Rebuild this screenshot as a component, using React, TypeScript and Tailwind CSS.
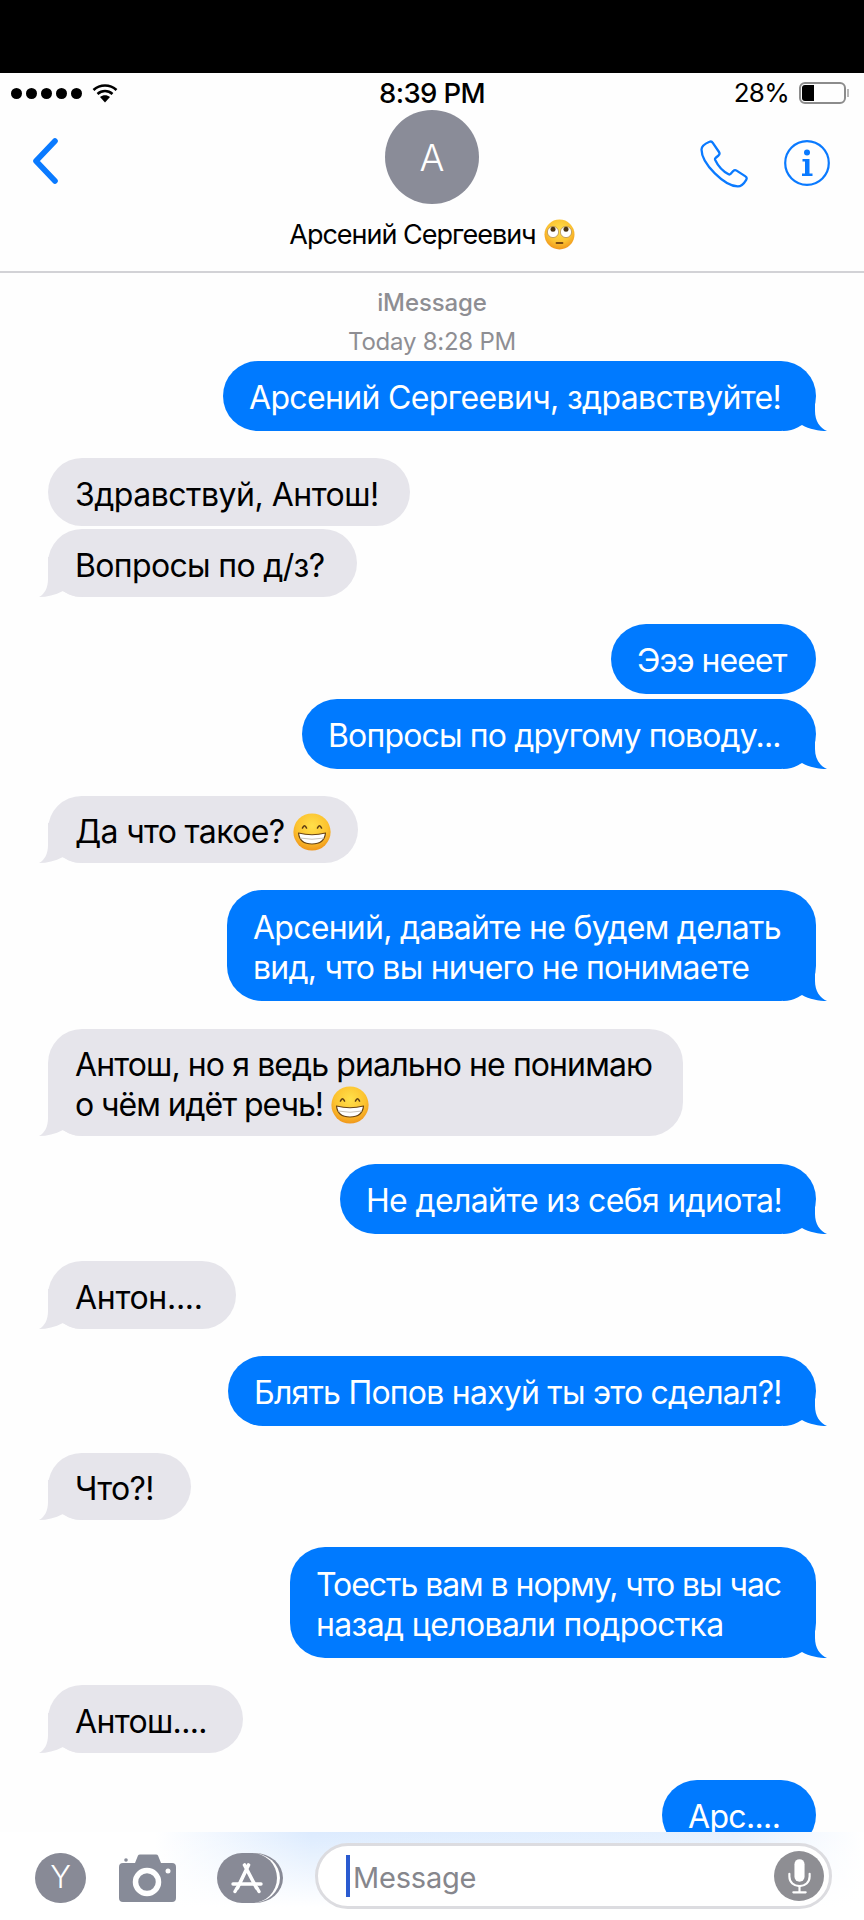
import React from "react";

const FONT = "font-['Inter','Liberation_Sans',sans-serif]";

function Grin({ id, className }: { id: string; className?: string }) {
  return (
    <svg viewBox="0 0 38 38" className={className}>
      <defs>
        <radialGradient id={id} cx="50%" cy="34%" r="70%">
          <stop offset="0%" stopColor="#ffe04a" />
          <stop offset="60%" stopColor="#fcc22e" />
          <stop offset="100%" stopColor="#ee8f18" />
        </radialGradient>
      </defs>
      <circle cx="19" cy="19" r="18.6" fill={`url(#${id})`} />
      <path d="M9.5 15 Q11.5 10.5 13.5 15" fill="none" stroke="#5b3a12" strokeWidth="1.6" strokeLinecap="round" />
      <path d="M24.5 15 Q26.5 10.5 28.5 15" fill="none" stroke="#5b3a12" strokeWidth="1.6" strokeLinecap="round" />
      <path d="M5.5 20 Q19 23.5 32.5 20 Q31.5 31 19 31 Q6.5 31 5.5 20Z" fill="#fff" stroke="#6a4413" strokeWidth="1.2" strokeLinejoin="round" />
      <path d="M7 25 Q19 27.5 31 25" fill="none" stroke="#c2bcb2" strokeWidth="0.9" />
    </svg>
  );
}

function RollEyes({ className }: { className?: string }) {
  return (
    <svg viewBox="0 0 31 31" className={className}>
      <defs>
        <radialGradient id="roll" cx="50%" cy="36%" r="68%">
          <stop offset="0%" stopColor="#ffe04a" />
          <stop offset="60%" stopColor="#fbc232" />
          <stop offset="100%" stopColor="#ee8f18" />
        </radialGradient>
      </defs>
      <circle cx="15.5" cy="15.5" r="15" fill="url(#roll)" />
      <circle cx="9" cy="13" r="5.6" fill="#fff" stroke="#a8834a" strokeWidth="0.7" />
      <circle cx="22" cy="13" r="5.6" fill="#fff" stroke="#a8834a" strokeWidth="0.7" />
      <circle cx="9" cy="10.2" r="2.5" fill="#4a3312" />
      <circle cx="22" cy="10.2" r="2.5" fill="#4a3312" />
      <path d="M12.5 24 H18.5" stroke="#7a4a12" strokeWidth="1.8" strokeLinecap="round" />
    </svg>
  );
}

function TailRight() {
  return (
    <svg viewBox="0 0 44 40" className="absolute right-[-11px] bottom-0 h-[40px] w-[44px]">
      <path d="M0 40 L0 0 L32 0 L32 20 C32 30 37 37 44 40 C36 40 26 38 19 34 C14 37 8 40 0 40Z" fill="#007aff" />
    </svg>
  );
}

function TailLeft() {
  return (
    <svg viewBox="0 0 44 40" className="absolute left-[-9px] bottom-0 h-[40px] w-[44px]">
      <path d="M44 40 L44 0 L9 0 L9 22 C9 30 6 37 0 40 C8 40 16 38 24 34 C29 37 36 40 44 40Z" fill="#e6e5eb" />
    </svg>
  );
}

type Msg = {
  me: boolean;
  lines: React.ReactNode[];
  box: string;
  tail: boolean;
};

const messages: Msg[] = [
  { me: true, lines: ["Арсений Сергеевич, здравствуйте!"], box: "mt-[4px] w-[593px] h-[70px]", tail: true },
  { me: false, lines: [<span className="tracking-[-0.5px]" key="z">Здравствуй, Антош!</span>], box: "mt-[27px] w-[362px] h-[68px]", tail: false },
  { me: false, lines: ["Вопросы по д/з?"], box: "mt-[3px] w-[309px] h-[68px]", tail: true },
  { me: true, lines: [<span className="tracking-[-1px]" key="e">Эээ нееет</span>], box: "mt-[27px] w-[205px] h-[70px]", tail: false },
  { me: true, lines: [<span className="tracking-[-0.85px]" key="v">Вопросы по другому поводу...</span>], box: "mt-[5px] w-[514px] h-[70px]", tail: true },
  {
    me: false,
    lines: [
      <span className="flex items-center gap-[9px]" key="a">
        Да что такое?
        <Grin id="g1" className="h-[38px] w-[38px] shrink-0" />
      </span>,
    ],
    box: "mt-[27px] w-[310px] h-[67px]",
    tail: true,
  },
  {
    me: true,
    lines: [
      <span className="tracking-[-0.74px]" key="d">Арсений, давайте не будем делать</span>,
      <span className="tracking-[-0.78px]" key="w">вид, что вы ничего не понимаете</span>,
    ],
    box: "mt-[27px] w-[589px] h-[111px]",
    tail: true,
  },
  {
    me: false,
    lines: [
      <span className="tracking-[-0.9px]" key="r">Антош, но я ведь риально не понимаю</span>,
      <span className="flex items-center gap-[8px] tracking-[-1.05px]" key="b">
        о чём идёт речь!
        <Grin id="g2" className="h-[38px] w-[38px] shrink-0" />
      </span>,
    ],
    box: "mt-[28px] w-[635px] h-[107px]",
    tail: true,
  },
  { me: true, lines: ["Не делайте из себя идиота!"], box: "mt-[28px] w-[476px] h-[70px]", tail: true },
  { me: false, lines: [<span className="tracking-[-0.3px]" key="n">Антон....</span>], box: "mt-[27px] w-[188px] h-[68px]", tail: true },
  { me: true, lines: [<span className="tracking-[-0.78px]" key="p">Блять Попов нахуй ты это сделал?!</span>], box: "mt-[27px] w-[588px] h-[70px]", tail: true },
  { me: false, lines: ["Что?!"], box: "mt-[27px] w-[143px] h-[67px]", tail: true },
  {
    me: true,
    lines: [
      <span className="tracking-[-1.06px]" key="t">Тоесть вам в норму, что вы час</span>,
      "назад целовали подростка",
    ],
    box: "mt-[27px] w-[526px] h-[111px]",
    tail: true,
  },
  { me: false, lines: ["Антош...."], box: "mt-[27px] w-[195px] h-[68px]", tail: true },
  { me: true, lines: ["Арс...."], box: "mt-[27px] w-[154px] h-[70px]", tail: false },
];

function Bubble({ m }: { m: Msg }) {
  const cls = m.me
    ? "self-end mr-[48px] bg-[#007aff] text-white pl-[26px] pt-[4px] rounded-[35px]"
    : "self-start ml-[48px] bg-[#e6e5eb] text-black pl-[27px] pt-[5px] rounded-[34px]";
  return (
    <div className={`relative flex shrink-0 flex-col justify-center ${cls} ${m.box}`}>
      {m.tail && (m.me ? <TailRight /> : <TailLeft />)}
      {m.lines.map((l, i) => (
        <div key={i} className="relative h-[40px] whitespace-nowrap text-[32px] leading-[40px] tracking-[-0.66px]">
          {l}
        </div>
      ))}
    </div>
  );
}

export default function App() {
  return (
    <div className={`flex h-[1920px] w-[864px] flex-col overflow-hidden bg-[#fefefe] ${FONT}`}>
      <div className="h-[73px] shrink-0 bg-black" />

      <header className="h-[200px] shrink-0 border-b-2 border-[#d2d2d6]">
        <div className="grid h-[37px] grid-cols-3 items-center pt-[3px]">
          <div className="flex items-center pl-[11px]">
            <div className="flex gap-[4px]">
              <span className="h-[11px] w-[11px] rounded-full bg-black" />
              <span className="h-[11px] w-[11px] rounded-full bg-black" />
              <span className="h-[11px] w-[11px] rounded-full bg-black" />
              <span className="h-[11px] w-[11px] rounded-full bg-black" />
              <span className="h-[11px] w-[11px] rounded-full bg-black" />
            </div>
            <svg viewBox="0 0 26 19" className="ml-[10px] h-[19px] w-[26px]">
              <path d="M1.5 6 C8 0 18 0 24.5 6" fill="none" stroke="#000" strokeWidth="2.6" />
              <path d="M5.5 10 C10 6 16 6 20.5 10" fill="none" stroke="#000" strokeWidth="2.6" />
              <path d="M8 13 C11 10.6 15 10.6 18 13 L13 18.5Z" fill="#000" />
            </svg>
          </div>
          <div className="text-center text-[27.5px] font-medium leading-[30px] tracking-[-0.6px] text-black">8:39 PM</div>
          <div className="flex items-center justify-end pr-[15px]">
            <span className="text-[26px] leading-[30px] tracking-[-0.7px] text-black">28%</span>
            <span className="relative ml-[10px] h-[22px] w-[47px] rounded-[6px] border-2 border-[#8c8c8c]">
              <span className="absolute left-[1px] top-[1px] h-[16px] w-[12px] rounded-l-[3px] bg-black" />
            </span>
            <span className="ml-[1px] h-[8px] w-[2px] bg-[#b8b8b8]" />
          </div>
        </div>

        <div className="grid h-[94px] grid-cols-3">
          <div className="pl-[32px] pt-[28px]">
            <svg viewBox="0 0 26 46" className="h-[46px] w-[26px]">
              <path d="M23 3 L4 23 L23 43" fill="none" stroke="#0a7aff" strokeWidth="5.6" strokeLinecap="round" strokeLinejoin="round" />
            </svg>
          </div>
          <div className="flex justify-center">
            <div className="flex h-[94px] w-[94px] items-center justify-center rounded-full bg-[#8a8c98] pt-[2px] text-[37px] font-light text-white">
              A
            </div>
          </div>
          <div className="flex justify-end gap-[36px] pr-[34px] pt-[30px]">
            <svg viewBox="0 0 48 48" className="h-[48px] w-[48px]">
              <path
                d="M9.5 1.8 C10.8 1.2 12 1.6 12.8 2.8 L19 12 C19.8 13.2 19.6 14.5 18.5 15.5 L15.5 18 C15 18.5 14.9 19.2 15.2 19.9 C18.3 26.5 23 31.2 28.6 34.2 C29.3 34.6 30 34.5 30.5 34 L33.2 31 C34.2 30 35.4 29.8 36.6 30.6 L45.5 36.4 C46.8 37.2 47 38.6 46.2 39.8 C44 43.5 41 46.4 37.8 46.4 C25 46.4 1.5 24 1.5 9.5 C1.5 6.4 5.8 3.4 9.5 1.8Z"
                fill="none"
                stroke="#0a7aff"
                strokeWidth="2.3"
                strokeLinejoin="round"
              />
            </svg>
            <svg viewBox="0 0 46 46" className="h-[46px] w-[46px]">
              <circle cx="23" cy="23" r="21.8" fill="none" stroke="#0a7aff" strokeWidth="2.2" />
              <circle cx="23" cy="12.5" r="3" fill="#0a7aff" />
              <path d="M18.5 19 H25.5 V33.5 H28.5 V36 H18 V33.5 H21 V21.5 H18.5Z" fill="#0a7aff" />
            </svg>
          </div>
        </div>

        <div className="mt-[15px] flex h-[30px] items-center justify-center gap-[8px]">
          <span className="relative top-[1px] text-[27px] leading-[30px] tracking-[-1px] text-black">Арсений Сергеевич</span>
          <RollEyes className="h-[31px] w-[31px]" />
        </div>
      </header>

      <main className="flex min-h-0 flex-1 flex-col overflow-hidden">
        <div className="mt-[15px] h-[30px] shrink-0 text-center text-[24px] font-medium leading-[30px] tracking-[-0.1px] text-[#8e8e93]">iMessage</div>
        <div className="mt-[9px] h-[30px] shrink-0 text-center text-[24px] leading-[30px] tracking-[-0.25px] text-[#8e8e93]">Today 8:28 PM</div>
        {messages.map((m, i) => (
          <Bubble key={i} m={m} />
        ))}
      </main>

      <footer className="flex h-[88px] shrink-0 items-center bg-[linear-gradient(to_bottom,rgba(255,255,255,0)_0%,#ffffff_85%),linear-gradient(to_right,#ffffff_18%,#dcebfe_36%,#e6f1ff_85%,#ffffff_100%)] pl-[35px]">
        <div className="mt-[3px] flex h-[50px] w-[51px] items-center justify-center rounded-full bg-[#888a96] text-[31px] font-light text-white">Y</div>
        <svg viewBox="0 0 57 48" className="ml-[33px] mt-[3px] h-[48px] w-[57px]">
          <path d="M4 9 H16 L19 1.5 Q19.5 0.5 21 0.5 H37 Q38.5 0.5 39 1.5 L42 9 H53 Q57 9 57 13 V44 Q57 48 53 48 H4 Q0 48 0 44 V13 Q0 9 4 9Z" fill="#878b98" />
          <circle cx="28" cy="28" r="11.5" fill="none" stroke="#fff" strokeWidth="5.5" />
          <circle cx="49" cy="17" r="2.5" fill="#fff" />
          <circle cx="7" cy="6" r="1.8" fill="#878b98" />
        </svg>
        <svg viewBox="0 0 66 50" className="ml-[41px] mt-[3px] h-[50px] w-[66px]">
          <ellipse cx="38" cy="25" rx="28" ry="25" fill="#888a96" />
          <ellipse cx="35" cy="25" rx="28" ry="25" fill="#fff" />
          <rect x="0" y="0" width="60" height="50" rx="25" fill="#888a96" />
          <path d="M31.5 12 L20.5 35 M27.5 12 L39.5 35" fill="none" stroke="#fff" strokeWidth="3.6" strokeLinecap="round" />
          <path d="M16 31 H44" fill="none" stroke="#fff" strokeWidth="3.4" strokeLinecap="round" />
          <path d="M20 35 L18 38.5 M40 35 L42 38.5" fill="none" stroke="#fff" strokeWidth="3.4" strokeLinecap="round" />
        </svg>
        <div className="relative ml-[32px] flex h-[66px] w-[517px] items-center rounded-full border-[3px] border-[#dcdce0] bg-white pl-[28px]">
          <span className="h-[42px] w-[4px] bg-[#2a5bd0]" />
          <span className="ml-[3px] mt-[3px] text-[29px] leading-[36px] tracking-[-0.2px] text-[#86868c]">Message</span>
          <div className="ml-auto mr-[5px] flex h-[50px] w-[50px] items-center justify-center rounded-full bg-[#8e8e93]">
            <svg viewBox="0 0 24 32" className="h-[36px] w-[27px]">
              <rect x="7.5" y="1" width="9" height="20" rx="4.5" fill="#fff" />
              <path d="M3 14 V16.5 C3 21.5 7 25 12 25 C17 25 21 21.5 21 16.5 V14" fill="none" stroke="#fff" strokeWidth="1.9" strokeLinecap="round" />
              <path d="M12 25 V30 M6.5 30.5 H17.5" fill="none" stroke="#fff" strokeWidth="1.9" strokeLinecap="round" />
            </svg>
          </div>
        </div>
      </footer>
    </div>
  );
}
